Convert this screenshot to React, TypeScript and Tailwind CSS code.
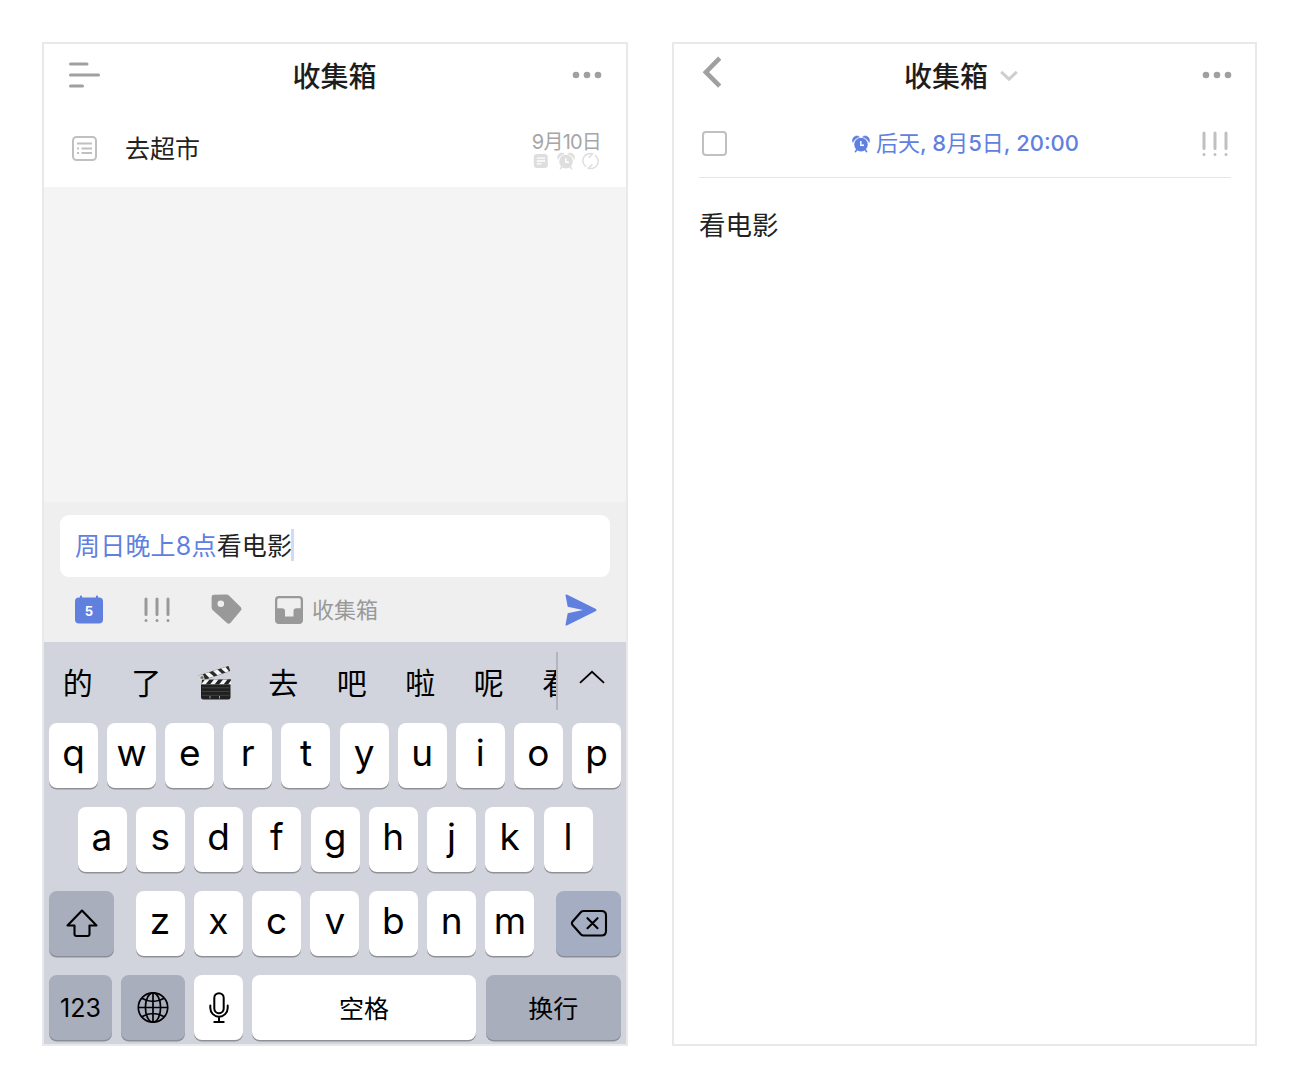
import React from "react";

const ALARM = (
  <>
    <circle cx="9" cy="9.6" r="6.8" fill="currentColor" />
    <path d="M0.9 7.4C-0.6 4.6 1.6 0.8 5 0.9Q6.8 1 7.4 2Q2.6 3.2 0.9 7.4ZM17.1 7.4C18.6 4.6 16.4 0.8 13 0.9Q11.2 1 10.6 2Q15.4 3.2 17.1 7.4Z" fill="currentColor" stroke="currentColor" strokeWidth="0.5" />
    <path d="M4.8 14.6L3.5 16.6M13.2 14.6L14.5 16.6" stroke="currentColor" strokeWidth="1.7" strokeLinecap="round" />
    <path d="M8.8 6V10.3H12" stroke="#fff" strokeWidth="1.4" fill="none" />
  </>
);

function Dots() {
  return (
    <svg className="-mt-[3px] h-[8px] w-[30px] text-[#a0a0a0]" viewBox="0 0 30 8" fill="currentColor">
      <circle cx="4" cy="4" r="3.3" />
      <circle cx="15" cy="4" r="3.3" />
      <circle cx="26" cy="4" r="3.3" />
    </svg>
  );
}

function Priority() {
  return (
    <svg className="h-[26px] w-[28px]" viewBox="0 0 28 26" stroke="currentColor" strokeWidth="3" strokeLinecap="round">
      <path d="M3 2V17.5M14 2V17.5M25 2V17.5" />
      <path d="M3 23.6V23.61M14 23.6V23.61M25 23.6V23.61" />
    </svg>
  );
}

function Key({ label }: { label: string }) {
  return (
    <div className="flex h-[65px] w-[49px] shrink-0 justify-center rounded-[8px] bg-white text-[37px] leading-[60px] font-normal text-black shadow-[0_1.5px_0_#8f9196]">
      {label}
    </div>
  );
}

function InboxScreen() {
  return (
    <section className="flex h-[1004px] w-[586px] flex-col border-2 border-[#e9e9e9]">
      <header className="flex h-[64px] items-center justify-between pr-[24px] pl-[24px]">
        <svg className="-mt-[3px] h-[28px] w-[33px]" viewBox="0 0 33 28" stroke="#a0a0a0" strokeWidth="3" strokeLinecap="round">
          <path d="M2.5 3H19M2.5 14H30.5M2.5 25H14.5" />
        </svg>
        <h1 className="-ml-[4px] text-[28px] leading-[64px] font-medium text-[#1d1d1d]"><span className="block pt-[1px]">收集箱</span></h1>
        <Dots />
      </header>

      <div className="flex h-[79px] items-center pt-[1px] pr-[26px] pl-[28px]">
        <svg className="h-[25px] w-[25px]" viewBox="0 0 25 25" fill="none" stroke="#c0c0c0" strokeWidth="2">
          <rect x="1" y="1" width="23" height="23" rx="3.5" />
          <path d="M5 7.5H20M9.5 12.5H20M9.5 17H20M5 12.5H7M5 17H7" />
        </svg>
        <span className="ml-[28px] pt-[2px] text-[25px] leading-[30px] text-[#222]">去超市</span>
        <div className="ml-auto flex flex-col items-end pt-[5px]">
          <span className="mr-[-1px] text-[20px] leading-[20px] tracking-[-0.8px] text-[#a6a6a6]">9月10日</span>
          <div className="flex items-center gap-[7px] text-[#dedede]">
            <svg className="h-[18px] w-[18px]" viewBox="0 0 18 18">
              <rect x="1.8" y="2" width="14" height="14" rx="3" fill="currentColor" />
              <path d="M4.8 6.2H13M4.8 9H13M4.8 11.8H9.5" stroke="#fff" strokeWidth="1.3" />
            </svg>
            <svg className="h-[18px] w-[18px]" viewBox="0 0 18 18">{ALARM}</svg>
            <svg className="h-[18px] w-[18px]" viewBox="0 0 18 18" fill="none" stroke="currentColor" strokeWidth="1.5">
              <path d="M4.2 14.8A7.3 7.3 0 0 1 10.6 1.8L6.6 5.8M12.8 3.2A7.3 7.3 0 0 1 6.4 16.2L10.4 12.2" />
            </svg>
          </div>
        </div>
      </div>

      <div className="h-[315px] bg-[#f4f4f4]" />

      <div className="h-[140px] bg-[#efefef] px-[16px] pt-[13px]">
        <div className="flex h-[62px] items-center rounded-[9px] bg-white pl-[15px] text-[25px] text-[#222]">
          <span className="pt-[2px] tracking-[0.2px] text-[#6080e0]">周日晚上8点</span>
          <span className="pt-[2px] tracking-[0.15px]">看电影</span>
          <span className="-mt-[2px] -ml-[1px] h-[32px] w-[3px] bg-[#cfdcf8]" />
        </div>
        <div className="flex h-[65px] items-center pr-[13px] pl-[15px] text-[#999]">
          <svg className="h-[29px] w-[28px]" viewBox="0 0 28 29" fill="#6080e0">
            <rect x="0" y="2.5" width="28" height="26" rx="4" />
            <path d="M6 1.5V4M22 1.5V4" stroke="#6080e0" strokeWidth="2.2" strokeLinecap="round" />
            <text x="14" y="20.5" textAnchor="middle" fill="#fff" fontSize="13" fontWeight="700">5</text>
          </svg>
          <div className="ml-[40px] h-[26px]"><Priority /></div>
          <svg className="ml-[40px] h-[31px] w-[31px]" viewBox="0 0 31 31">
            <path fillRule="evenodd" d="M3 0.8L15.4 0.5Q17 0.5 18.2 1.7L29.6 13Q31.4 15 29.6 16.8L19.6 28.7Q17.8 30.6 16 28.9L1.6 16Q0.6 15 0.6 13.6V3Q0.6 0.8 3 0.8ZM9.8 6.5A3.3 3.3 0 1 0 9.8 13.1A3.3 3.3 0 1 0 9.8 6.5Z" fill="#999" />
          </svg>
          <svg className="ml-[33px] h-[28px] w-[28px]" viewBox="0 0 28 28">
            <path fillRule="evenodd" d="M4 0H24Q28 0 28 4V24Q28 28 24 28H4Q0 28 0 24V4Q0 0 4 0ZM4 2.3Q2.3 2.3 2.3 4V12.3H7Q10 12.3 10 15V20.5H18.5V15Q18.5 12.3 21.5 12.3H25.7V4Q25.7 2.3 24 2.3Z" fill="#999" />
          </svg>
          <span className="ml-[9px] text-[22px] leading-[30px]">收集箱</span>
          <svg className="ml-auto h-[32px] w-[32px]" viewBox="0 0 32 32">
            <path d="M0.5 1.2Q0.4 0.2 1.8 0.6L31 15Q32 16 31 17L1.8 31.4Q0.4 31.8 0.5 30.8L2.7 19.3L18 16L2.7 12.7Z" fill="#6080e0" />
          </svg>
        </div>
      </div>

      <div className="h-[402px] bg-[#d1d4dc] text-black">
        <div className="flex h-[81px] items-center pb-[4px]">
          <div className="flex h-[58px] w-[514px] items-center overflow-hidden border-r-2 border-[#b3b5bb] text-[30px] leading-[60px]">
            {["的", "了", "", "去", "吧", "啦", "呢", "看"].map((word, i) => (
              <span key={i} className="flex h-[60px] w-[68.5px] shrink-0 items-center justify-center pt-[5px] pr-[1px] font-normal">
                {word || <Clapper />}
              </span>
            ))}
          </div>
          <svg className="mt-[-8px] ml-[20px] h-[14px] w-[28px]" viewBox="0 0 28 14" fill="none" stroke="#000" strokeWidth="1.8">
            <path d="M2 12.8L14 1.8L26 12.8" />
          </svg>
        </div>
        <div className="flex flex-col gap-[19px] px-[5px]">
          <div className="flex justify-between">{"qwertyuiop".split("").map((k) => <Key key={k} label={k} />)}</div>
          <div className="flex justify-between px-[28.5px]">{"asdfghjkl".split("").map((k) => <Key key={k} label={k} />)}</div>
          <div className="flex justify-between">
            <div className="flex h-[65px] w-[65px] items-center justify-center rounded-[8px] bg-[#a8aebc] shadow-[0_1.5px_0_#898d96]">
              <svg className="h-[30px] w-[32px]" viewBox="0 0 32 30" fill="none" stroke="#000" strokeWidth="2.1" strokeLinejoin="round">
                <path d="M16 1.5L30.5 16.5H23.5V25Q23.5 27 21.5 27H10.5Q8.5 27 8.5 25V16.5H1.5Z" />
              </svg>
            </div>
            <div className="flex w-[399px] justify-between">{"zxcvbnm".split("").map((k) => <Key key={k} label={k} />)}</div>
            <div className="flex h-[65px] w-[65px] items-center justify-center rounded-[8px] bg-[#a5adc2] shadow-[0_1.5px_0_#898d96]">
              <svg className="mt-[-2px] h-[28px] w-[38px]" viewBox="0 0 38 28" fill="none" stroke="#000" strokeWidth="2.1" strokeLinecap="round" strokeLinejoin="round">
                <path d="M13.5 2H31.5Q36 2 36 6.5V22Q36 26.5 31.5 26.5H13.5Q12 26.5 11 25.5L2.6 16Q1.2 14.2 2.6 12.5L11 3Q12 2 13.5 2ZM17.5 9.2L27.5 19.2M27.5 9.2L17.5 19.2" />
              </svg>
            </div>
          </div>
          <div className="flex">
            <div className="flex h-[65px] w-[63px] items-center justify-center rounded-[8px] bg-[#a8aebc] pt-[3px] text-[25px] shadow-[0_1.5px_0_#898d96]">123</div>
            <div className="ml-[9px] flex h-[65px] w-[64px] items-center justify-center rounded-[8px] bg-[#a8aebc] shadow-[0_1.5px_0_#898d96]">
              <svg className="h-[32px] w-[32px]" viewBox="0 0 32 32" fill="none" stroke="#000" strokeWidth="1.7">
                <circle cx="16" cy="15.5" r="14.7" />
                <ellipse cx="16" cy="15.5" rx="7.6" ry="14.7" />
                <path d="M16 0.8V30.2M1.3 15.5H30.7M4.8 6.3Q16 12.7 27.2 6.3M4.8 24.7Q16 18.3 27.2 24.7" />
              </svg>
            </div>
            <div className="ml-[9px] flex h-[65px] w-[49px] items-center justify-center rounded-[8px] bg-white shadow-[0_1.5px_0_#8f9196]">
              <svg className="h-[32px] w-[20px]" viewBox="0 0 20 32" fill="none" stroke="#000" strokeWidth="2" strokeLinecap="round">
                <rect x="5.3" y="1.2" width="9.4" height="20" rx="4.7" />
                <path d="M1.3 13.5V16A8.7 8.7 0 0 0 18.7 16V13.5M10 25V30M5.3 30H14.7" />
              </svg>
            </div>
            <div className="ml-[9px] flex h-[65px] w-[224px] items-center justify-center rounded-[8px] bg-white pt-[4px] text-[25px] shadow-[0_1.5px_0_#8f9196]">空格</div>
            <div className="ml-[9.5px] flex h-[65px] w-[135.5px] items-center justify-center rounded-[8px] bg-[#a8aebc] pt-[4px] text-[25px] shadow-[0_1.5px_0_#898d96]">换行</div>
          </div>
        </div>
      </div>
    </section>
  );
}

function Clapper() {
  return (
    <svg className="h-[36px] w-[36px]" viewBox="0 0 36 36">
      <path d="M1.5 10.5L31.5 1L33.2 6L4.5 16Z" fill="#2b2b2b" />
      <path d="M8 8.5L12 7.2L17 11.5L12.5 13ZM16 5.9L20.5 4.5L25 8.8L20.5 10.3ZM24 3.4L28.5 2L32 6.3L28.5 7.6Z" fill="#f4f4f4" />
      <path d="M1.5 10.5L6 9.2L8 14.8L3.5 18.5Z" fill="#dadada" />
      <circle cx="5" cy="12.5" r="1.6" fill="#777" />
      <path d="M5 14.8L34 14.2L33.5 19.5H4.5Z" fill="#222" />
      <path d="M4 19.5L8 14.5H12.5L8.5 19.5ZM13 19.5L17 14.5H21.5L17.5 19.5ZM22 19.5L26 14.5H30.5L26.5 19.5ZM31 19.5L34 15.5V19.5Z" fill="#f4f4f4" />
      <path d="M4 19.5H33.5V32Q33.5 34.5 31 34.5H6.5Q4 34.5 4 32Z" fill="#202020" />
      <path d="M5 22.8H32.5M5 26.5H32.5M5 30.3H32.5" stroke="#4a4a4a" strokeWidth="0.8" />
      <path d="M13 31V33.5M22.5 31V33.5" stroke="#aaa" strokeWidth="0.9" />
    </svg>
  );
}

function DetailScreen() {
  return (
    <section className="flex h-[1004px] w-[585px] flex-col border-2 border-[#e9e9e9]">
      <header className="flex h-[64px] items-center pr-[23px] pl-[28px]">
        <svg className="mt-[-8px] h-[32px] w-[20px]" viewBox="0 0 20 32" fill="none" stroke="#a0a0a0" strokeWidth="4.6">
          <path d="M17.7 2.2L3.9 16.2L17.7 30.2" />
        </svg>
        <h1 className="ml-[182px] text-[28px] leading-[64px] font-medium text-[#1d1d1d]"><span className="block pt-[1px]">收集箱</span></h1>
        <svg className="ml-[12px] h-[12px] w-[18px]" viewBox="0 0 18 12" fill="none" stroke="#cfcfcf" strokeWidth="3">
          <path d="M1.2 1.8L9 9.2L16.8 1.8" />
        </svg>
        <div className="ml-auto flex"><Dots /></div>
      </header>
      <div className="mr-[24px] ml-[25px] flex h-[70px] items-center justify-between border-b border-[#e6e6e6] pt-[2px]">
        <span className="ml-[3px] h-[25px] w-[25px] rounded-[4px] border-2 border-[#c0c0c0]" />
        <div className="ml-[3px] flex items-center text-[22px] font-medium text-[#6080e0]">
          <svg className="mr-[6px] h-[18px] w-[18px]" viewBox="0 0 18 18">{ALARM}</svg>
          <span>
            <span className="font-normal">后天</span>, 8<span className="font-normal">月</span>5<span className="font-normal">日</span>, 20:00
          </span>
        </div>
        <div className="mr-[2px] text-[#c0c0c0]"><Priority /></div>
      </div>
      <p className="mt-[31px] ml-[25px] text-[26.5px] leading-[32px] text-[#222]">看电影</p>
    </section>
  );
}

export default function App() {
  return (
    <main className="flex h-[1088px] w-[1300px] gap-[44px] bg-white pt-[42px] pl-[42px] font-['Inter','Noto_Sans_CJK_SC',sans-serif]">
      <InboxScreen />
      <DetailScreen />
    </main>
  );
}
